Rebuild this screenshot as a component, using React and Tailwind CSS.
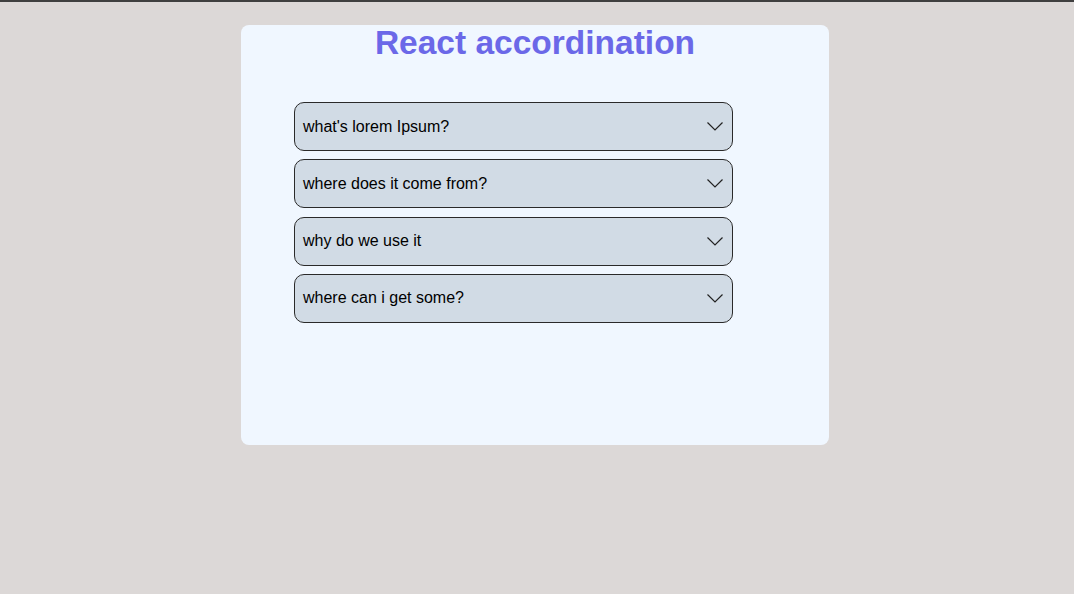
import React from 'react'

const questions = [
  "what's lorem Ipsum?",
  'where does it come from?',
  'why do we use it',
  'where can i get some?',
]

const Chevron = () => (
  <svg className="w-[16px] h-[9px] text-[#222]" viewBox="0 0 16 9" fill="none">
    <polyline points="0.5,0.5 8,8 15.5,0.5" stroke="currentColor" strokeWidth="1.2" />
  </svg>
)

const App = () => {
  return (
    <div className="min-h-[594px] bg-[#dcd8d7] border-t-2 border-[#3f3f3f] font-['Liberation_Sans',Arial,sans-serif]">
      <div className="pt-[23px] pl-[241px]">
        <section className="w-[588px] h-[420px] bg-[#f0f7ff] rounded-lg">
          <h1 className="text-center text-[33.5px] leading-[36px] font-bold text-[#6b68e8]">React accordination</h1>
          <div className="mt-[41px] ml-[53px] w-[439px] flex flex-col gap-[8.33px]">
            {questions.map((q) => (
              <button
                key={q}
                className="h-[49px] flex items-center justify-between pl-[8px] pr-[9px] bg-[#d1dbe5] border border-[#2a2a2a] rounded-[10px] text-[16px] text-black text-left"
              >
                <span>{q}</span>
                <Chevron />
              </button>
            ))}
          </div>
        </section>
      </div>
    </div>
  )
}

export default App
